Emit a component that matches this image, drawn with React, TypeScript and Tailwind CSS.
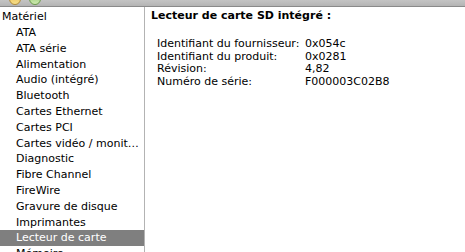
export default function App() {
  const items = [
    "ATA",
    "ATA série",
    "Alimentation",
    "Audio (intégré)",
    "Bluetooth",
    "Cartes Ethernet",
    "Cartes PCI",
    "Cartes vidéo / monit…",
    "Diagnostic",
    "Fibre Channel",
    "FireWire",
    "Gravure de disque",
    "Imprimantes",
    "Lecteur de carte",
    "Mémoire",
  ];
  const details = [
    ["Identifiant du fournisseur:", "0x054c"],
    ["Identifiant du produit:", "0x0281"],
    ["Révision:", "4,82"],
    ["Numéro de série:", "F000003C02B8"],
  ];

  return (
    <div className="flex h-[252px] w-[465px] flex-col overflow-hidden bg-white font-['DejaVu_Sans',sans-serif] text-[11px] text-black">
      <div className="flex h-[7px] shrink-0 items-end gap-[8px] overflow-hidden border-b border-[#8a8a8a] bg-gradient-to-b from-[#c4c4c4] to-[#b4b4b4] pl-[9px]">
        <div className="mb-[1px] h-[12px] w-[12px] shrink-0 rounded-full border border-[#b08a3a] bg-gradient-to-b from-[#e8b84a] to-[#f6e08a]" />
        <div className="mb-[1px] h-[12px] w-[12px] shrink-0 rounded-full border border-[#6a9a4a] bg-gradient-to-b from-[#8cc46a] to-[#cfeab0]" />
      </div>
      <div className="flex min-h-0 flex-1">
        <div className="w-[145px] shrink-0 overflow-hidden border-r border-[#b3b3b3] pt-[2px]">
          <div className="h-[16px] truncate pl-[2px] leading-[16px]">Matériel</div>
          {items.map((it) => (
            <div
              key={it}
              className={
                it === "Lecteur de carte"
                  ? "h-[15.8px] truncate bg-[#7f7f7f] pl-[16px] leading-[15.8px] text-white"
                  : "h-[15.8px] truncate pl-[16px] leading-[15.8px]"
              }
            >
              {it}
            </div>
          ))}
        </div>
        <div className="flex-1 pl-[6px] pt-[1px]">
          <div className="font-bold leading-[16px]">Lecteur de carte SD intégré :</div>
          <div className="mt-[14px] grid grid-cols-[148px_1fr] pl-[6px] leading-[12.5px]">
            {details.map(([k, v]) => (
              <div key={k} className="contents">
                <div>{k}</div>
                <div>{v}</div>
              </div>
            ))}
          </div>
        </div>
      </div>
    </div>
  );
}
